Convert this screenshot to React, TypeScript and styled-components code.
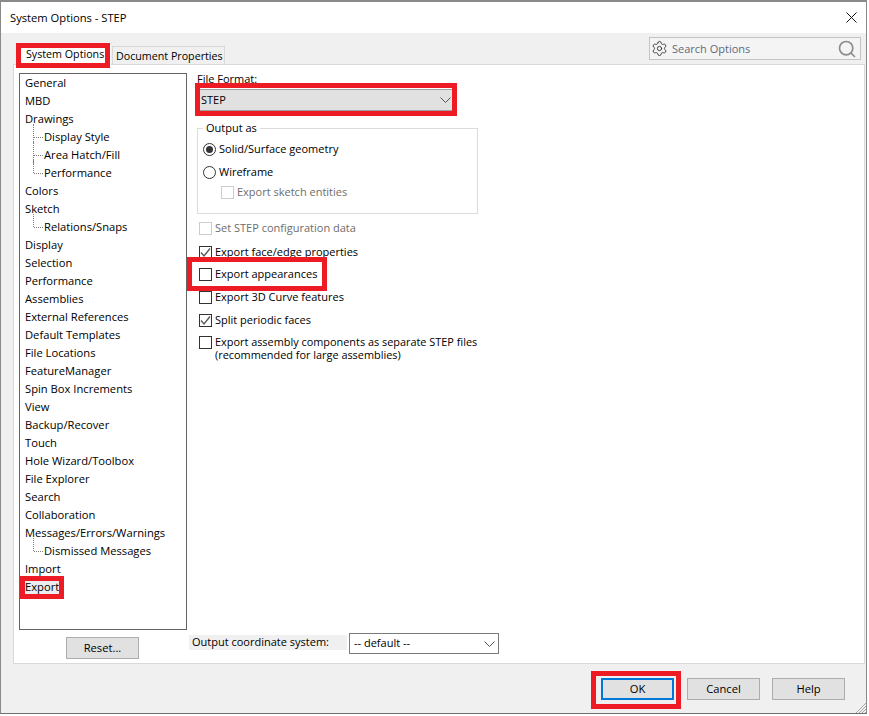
import React from 'react';
import styled, { createGlobalStyle } from 'styled-components';
import { Settings, Search } from 'lucide-react';

const GlobalStyle = createGlobalStyle`
  html, body {
    margin: 0;
    padding: 0;
    background: #ffffff;
  }
  body {
    font-family: "Open Sans", "Noto Sans", sans-serif;
    font-size: 11px;
    color: #000;
  }
`;

interface TreeItem {
  label: string;
  child?: boolean;
  last?: boolean;
  selected?: boolean;
}

const treeItems: TreeItem[] = [
  { label: 'General' },
  { label: 'MBD' },
  { label: 'Drawings' },
  { label: 'Display Style', child: true },
  { label: 'Area Hatch/Fill', child: true },
  { label: 'Performance', child: true, last: true },
  { label: 'Colors' },
  { label: 'Sketch' },
  { label: 'Relations/Snaps', child: true, last: true },
  { label: 'Display' },
  { label: 'Selection' },
  { label: 'Performance' },
  { label: 'Assemblies' },
  { label: 'External References' },
  { label: 'Default Templates' },
  { label: 'File Locations' },
  { label: 'FeatureManager' },
  { label: 'Spin Box Increments' },
  { label: 'View' },
  { label: 'Backup/Recover' },
  { label: 'Touch' },
  { label: 'Hole Wizard/Toolbox' },
  { label: 'File Explorer' },
  { label: 'Search' },
  { label: 'Collaboration' },
  { label: 'Messages/Errors/Warnings' },
  { label: 'Dismissed Messages', child: true, last: true },
  { label: 'Import' },
  { label: 'Export', selected: true },
];

// Red annotation boxes drawn on top of the dialog
const highlights = [
  { x: 16, y: 43, w: 94, h: 25 },
  { x: 195, y: 83, w: 262, h: 33 },
  { x: 187, y: 257, w: 140, h: 34 },
  { x: 20, y: 576, w: 44, h: 23 },
  { x: 591, y: 671, w: 90, h: 38 },
];

const Chevron = () => (
  <ChevronIcon width="11" height="6" viewBox="0 0 11 6">
    <polyline points="0.5,0.5 5.5,5.5 10.5,0.5" fill="none" stroke="#555" strokeWidth="1" />
  </ChevronIcon>
);

const Tick = () => (
  <svg width="11" height="11" viewBox="0 0 11 11">
    <polyline points="1,5.5 4,9 10,1.5" fill="none" stroke="#5a5a5a" strokeWidth="1.4" />
  </svg>
);

const App: React.FC = () => {
  return (
    <>
      <GlobalStyle />
      <Dialog>
        <TitleBar>
          <TitleText>System Options - STEP</TitleText>
          <CloseIcon width="11" height="11" viewBox="0 0 11 11">
            <path d="M0.5 0.5 L10.5 10.5 M10.5 0.5 L0.5 10.5" stroke="#111" strokeWidth="1" fill="none" />
          </CloseIcon>
        </TitleBar>

        <Main>
          <Header>
            <Tabs>
              <Tab $active>System Options</Tab>
              <Tab>Document Properties</Tab>
            </Tabs>
            <SearchBox>
              <Settings size={17} strokeWidth={1.3} color="#333" />
              <SearchText>Search Options</SearchText>
              <SearchIcon>
                <Search size={20} strokeWidth={2} color="#8c8c8c" />
              </SearchIcon>
            </SearchBox>
          </Header>

          <Panel>
            <Sidebar>
              <Tree>
                {treeItems.map((item, index) => (
                  <TreeRow key={index} $child={item.child} $last={item.last}>
                    <TreeLabel $selected={item.selected}>{item.label}</TreeLabel>
                  </TreeRow>
                ))}
              </Tree>
              <ResetRow>
                <PushButton>Reset...</PushButton>
              </ResetRow>
            </Sidebar>

            <Content>
              <FieldLabel>File Format:</FieldLabel>
              <FormatSelect>
                <OptionText>STEP</OptionText>
                <Chevron />
              </FormatSelect>

              <Group>
                <GroupLegend>Output as</GroupLegend>
                <OptionRow $top={10} $indent={5}>
                  <Radio $checked />
                  <OptionText>Solid/Surface geometry</OptionText>
                </OptionRow>
                <OptionRow $top={3} $indent={5}>
                  <Radio />
                  <OptionText>Wireframe</OptionText>
                </OptionRow>
                <OptionRow $top={0} $indent={23}>
                  <CheckBox $disabled />
                  <OptionText $disabled>Export sketch entities</OptionText>
                </OptionRow>
              </Group>

              <OptionRow $top={4} $indent={2}>
                <CheckBox $disabled />
                <OptionText $disabled>Set STEP configuration data</OptionText>
              </OptionRow>
              <OptionRow $top={4} $indent={2}>
                <CheckBox><Tick /></CheckBox>
                <OptionText>Export face/edge properties</OptionText>
              </OptionRow>
              <OptionRow $top={2} $indent={2}>
                <CheckBox />
                <OptionText>Export appearances</OptionText>
              </OptionRow>
              <OptionRow $top={3} $indent={2}>
                <CheckBox />
                <OptionText>Export 3D Curve features</OptionText>
              </OptionRow>
              <OptionRow $top={3} $indent={2}>
                <CheckBox><Tick /></CheckBox>
                <OptionText>Split periodic faces</OptionText>
              </OptionRow>
              <TallOptionRow>
                <CheckBox />
                <TallOptionText>
                  Export assembly components as separate STEP files
                  <br />
                  (recommended for large assemblies)
                </TallOptionText>
              </TallOptionRow>

              <CoordinateRow>
                <CoordinateLabel>Output coordinate system:</CoordinateLabel>
                <CoordinateSelect>
                  <OptionText>-- default --</OptionText>
                  <Chevron />
                </CoordinateSelect>
              </CoordinateRow>
            </Content>
          </Panel>

          <Footer>
            <PushButton $primary>OK</PushButton>
            <PushButton>Cancel</PushButton>
            <PushButton>Help</PushButton>
          </Footer>
        </Main>

        <ResizeGrip width="11" height="11" viewBox="0 0 11 11">
          <path d="M11 1 L1 11 M11 4 L4 11 M11 7 L7 11 M11 10 L10 11" stroke="#a8a8a8" strokeWidth="1" fill="none" />
        </ResizeGrip>
      </Dialog>

      {highlights.map((box, index) => (
        <Highlight key={index} $x={box.x} $y={box.y} $w={box.w} $h={box.h} />
      ))}
    </>
  );
};

// === STYLED COMPONENTS ===

const Dialog = styled.div`
  position: relative;
  box-sizing: border-box;
  width: 867px;
  height: 714px;
  display: flex;
  flex-direction: column;
  background: #f0f0f0;
  border-top: 2px solid #8a8a8a;
  border-left: 1px solid #8a8a8a;
  border-bottom: 1px solid #6e6e6e;
  border-right: 1px solid #8a8a8a;
`;

const TitleBar = styled.div`
  height: 31px;
  flex-shrink: 0;
  display: flex;
  align-items: center;
  justify-content: space-between;
  background: #ffffff;
  padding: 0 9px 0 9px;
`;

const TitleText = styled.span`
  font-size: 11.2px;
`;

const CloseIcon = styled.svg`
  display: block;
`;

const Main = styled.div`
  flex: 1;
  display: flex;
  flex-direction: column;
  padding-left: 12px;
  min-height: 0;
`;

const Header = styled.div`
  height: 31px;
  flex-shrink: 0;
  display: flex;
  align-items: flex-end;
  justify-content: space-between;
`;

const Tabs = styled.div`
  display: flex;
  align-items: flex-end;
  padding-left: 4px;
`;

const Tab = styled.div<{ $active?: boolean }>`
  box-sizing: border-box;
  display: flex;
  align-items: center;
  position: relative;
  white-space: nowrap;
  font-size: 10.7px;
  ${props =>
    props.$active
      ? `
    width: 94px;
    height: 21px;
    padding: 0 0 1px 9px;
    background: #ffffff;
    margin-bottom: -1px;
  `
      : `
    width: 113px;
    height: 18px;
    margin-left: 1px;
    padding-left: 3px;
    background: #f0f0f0;
    border: 1px solid #d9d9d9;
    border-bottom: none;
  `}
`;

const SearchBox = styled.div`
  box-sizing: border-box;
  width: 212px;
  height: 23px;
  margin: 0 5px 4px 0;
  padding: 0 3px 0 1px;
  display: flex;
  align-items: center;
  gap: 4px;
  background: #f4f4f4;
  border: 1px solid #c4c4c4;
`;

const SearchText = styled.span`
  flex: 1;
  color: #5c6b80;
  margin-bottom: 1px;
`;

const SearchIcon = styled.span`
  display: flex;
`;

const Panel = styled.div`
  box-sizing: border-box;
  height: 600px;
  flex-shrink: 0;
  margin-right: 1px;
  display: flex;
  background: #ffffff;
  border: 1px solid #d9d9d9;
`;

const Sidebar = styled.div`
  width: 168px;
  flex-shrink: 0;
  margin: 8px 0 0 5px;
  display: flex;
  flex-direction: column;
`;

const Tree = styled.div`
  box-sizing: border-box;
  height: 557px;
  background: #ffffff;
  border: 1px solid #646464;
`;

const TreeRow = styled.div<{ $child?: boolean; $last?: boolean }>`
  box-sizing: border-box;
  position: relative;
  height: 18px;
  display: flex;
  align-items: center;
  padding: 0 0 2px ${props => (props.$child ? 24 : 5)}px;
  font-size: 11.2px;
  white-space: nowrap;

  ${props =>
    props.$child
      ? `
    &::before {
      content: '';
      position: absolute;
      left: 13px;
      top: -4px;
      height: ${props.$last ? 13 : 22}px;
      border-left: 1px dotted #808080;
    }
    &::after {
      content: '';
      position: absolute;
      left: 14px;
      top: 9px;
      width: 9px;
      border-top: 1px dotted #808080;
    }
  `
      : ''}
`;

const TreeLabel = styled.span<{ $selected?: boolean }>`
  position: relative;
  background: ${props => (props.$selected ? '#ececec' : 'transparent')};
`;

const ResetRow = styled.div`
  display: flex;
  justify-content: center;
  margin-top: 7px;
  padding-right: 1px;
`;

const PushButton = styled.button<{ $primary?: boolean }>`
  box-sizing: border-box;
  width: 73px;
  height: 22px;
  padding: 0 0 2px;
  font: inherit;
  font-size: 11.2px;
  color: #000;
  background: #e1e1e1;
  border: ${props => (props.$primary ? '2px solid #0078d7' : '1px solid #adadad')};
  margin-right: ${props => (props.$primary ? '1px' : '0')};
`;

const Content = styled.div`
  flex: 1;
  min-width: 0;
  display: flex;
  flex-direction: column;
  padding: 6px 0 9px 10px;
`;

const FieldLabel = styled.div`
  height: 16px;
  line-height: 15px;
`;

const FormatSelect = styled.div`
  box-sizing: border-box;
  width: 258px;
  height: 22px;
  margin-top: 2px;
  padding: 0 4px;
  display: flex;
  align-items: center;
  justify-content: space-between;
  background: #e1e1e1;
  border-top: 1px solid #a0a0a0;
  border-bottom: 1px solid #a0a0a0;
`;

const ChevronIcon = styled.svg`
  display: block;
`;

const Group = styled.div`
  position: relative;
  box-sizing: border-box;
  width: 281px;
  height: 86px;
  margin-top: 17px;
  border: 1px solid #dcdcdc;
`;

const GroupLegend = styled.span`
  position: absolute;
  left: 5px;
  top: -9px;
  padding: 0 3px;
  background: #ffffff;
`;

const OptionRow = styled.div<{ $top: number; $indent: number }>`
  height: 20px;
  margin-top: ${props => props.$top}px;
  padding-left: ${props => props.$indent}px;
  display: flex;
  align-items: center;
  gap: 3px;
  white-space: nowrap;
`;

const TallOptionRow = styled.div`
  margin-top: 6px;
  padding-left: 2px;
  display: flex;
  align-items: flex-start;
  gap: 3px;
  line-height: 13px;
  white-space: nowrap;
`;

const OptionText = styled.span<{ $disabled?: boolean }>`
  margin-bottom: 2px;
  color: ${props => (props.$disabled ? '#6d6d6d' : '#000')};
`;

const TallOptionText = styled.span`
  margin-top: -1px;
  font-size: 10.9px;
`;

const CheckBox = styled.span<{ $disabled?: boolean }>`
  box-sizing: border-box;
  width: 13px;
  height: 13px;
  flex-shrink: 0;
  display: flex;
  align-items: center;
  justify-content: center;
  background: #ffffff;
  border: 1px solid ${props => (props.$disabled ? '#cccccc' : '#333333')};
`;

const Radio = styled.span<{ $checked?: boolean }>`
  box-sizing: border-box;
  width: 13px;
  height: 13px;
  flex-shrink: 0;
  display: flex;
  align-items: center;
  justify-content: center;
  border: 1px solid #333333;
  border-radius: 50%;

  &::after {
    content: '';
    width: 7px;
    height: 7px;
    border-radius: 50%;
    background: ${props => (props.$checked ? '#333333' : 'transparent')};
  }
`;

const CoordinateRow = styled.div`
  margin: auto 0 0 -8px;
  display: flex;
  align-items: flex-start;
  gap: 2px;
`;

const CoordinateLabel = styled.div`
  box-sizing: border-box;
  width: 158px;
  height: 15px;
  margin-top: 2px;
  padding-left: 3px;
  line-height: 14px;
  background: #f0f0f0;
  white-space: nowrap;
`;

const CoordinateSelect = styled.div`
  box-sizing: border-box;
  width: 150px;
  height: 21px;
  padding: 0 3px 0 4px;
  display: flex;
  align-items: center;
  justify-content: space-between;
  background: #ffffff;
  border: 1px solid #7a7a7a;
`;

const Footer = styled.div`
  flex: 1;
  display: flex;
  justify-content: flex-end;
  gap: 12px;
  padding: 14px 21px 0 0;
`;

const ResizeGrip = styled.svg`
  position: absolute;
  right: 0;
  bottom: 0;
`;

const Highlight = styled.div<{ $x: number; $y: number; $w: number; $h: number }>`
  position: absolute;
  box-sizing: border-box;
  left: ${props => props.$x}px;
  top: ${props => props.$y}px;
  width: ${props => props.$w}px;
  height: ${props => props.$h}px;
  border: 5px solid #ed1c24;
  pointer-events: none;
`;

export default App;
